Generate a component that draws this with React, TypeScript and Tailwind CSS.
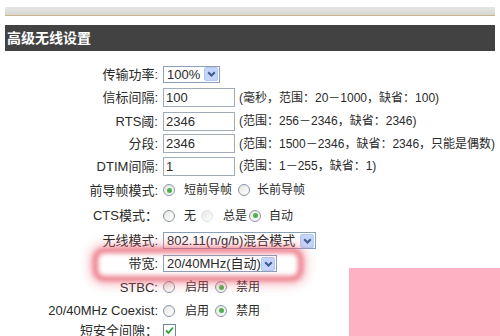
import React from "react";

const cjk = '"Liberation Sans", "Noto Sans CJK SC", sans-serif';

function Chevron() {
  return (
    <span className="flex h-[14px] w-[14px] items-center justify-center rounded-[2px] border border-[#b4c8f0] bg-[#c3d5fa]">
      <svg width="9" height="6" viewBox="0 0 9 6">
        <path d="M1.2 1.2 L4.5 4.5 L7.8 1.2" stroke="#3f5a8c" strokeWidth="2" fill="none" />
      </svg>
    </span>
  );
}

function Select({ text, w }: { text: string; w: number }) {
  return (
    <div
      className="flex h-[17px] items-center justify-between border border-[#8a9fba] bg-white pl-[3px] pr-[1px] text-[13px] leading-none text-[#2a2a2a]"
      style={{ width: w }}
    >
      <span className="whitespace-nowrap">{text}</span>
      <Chevron />
    </div>
  );
}

function Input({ v }: { v: string }) {
  return (
    <div className="flex h-[19px] w-[72px] items-center border border-[#a2acb8] bg-white pl-[2px] text-[13px] leading-none text-[#2a2a2a]">
      {v}
    </div>
  );
}

function Radio({ on, faded }: { on?: boolean; faded?: boolean }) {
  return (
    <span
      className={
        "flex h-[12px] w-[12px] shrink-0 items-center justify-center rounded-full border bg-gradient-to-br from-[#e6e6e0] to-white " +
        (faded ? "border-[#dde2e8]" : "border-[#8896a8]")
      }
    >
      {on && <span className="h-[5px] w-[5px] rounded-full bg-[#4cb34c]" />}
    </span>
  );
}

function Row({ label, h, children }: { label: string; h: number; children?: React.ReactNode }) {
  return (
    <div className="flex items-center" style={{ height: h }}>
      <div className="w-[158px] whitespace-nowrap text-right text-[13px] leading-none text-[#2a2a2a]">{label}</div>
      <div className="ml-[5px] flex items-center">{children}</div>
    </div>
  );
}

function Hint({ t }: { t: string }) {
  return <span className="ml-[4px] whitespace-nowrap text-[12px] leading-none text-[#2a2a2a]">{t}</span>;
}

function Opt({ t, ml = 9 }: { t: string; ml?: number }) {
  return (
    <span className="whitespace-nowrap text-[12px] leading-none text-[#2a2a2a]" style={{ marginLeft: ml }}>
      {t}
    </span>
  );
}

export default function App() {
  return (
    <div className="relative h-[336px] w-[500px] overflow-hidden bg-white" style={{ fontFamily: cjk }}>
      <div className="h-[7px]" />
      <div className="mx-[5px] h-[9px] border-b border-[#c9b58f] bg-gradient-to-b from-[#e6e6e4] to-[#d6d6d2]" />
      <div className="h-[9px]" />
      <div className="mx-[5px] flex h-[26px] items-center bg-[#424242] pl-[2px] text-[14px] font-bold text-white">
        高级无线设置
      </div>
      <div className="h-[11px]" />
      <div className="flex flex-col">
        <Row label="传输功率:" h={24}>
          <Select text="100%" w={57} />
        </Row>
        <Row label="信标间隔:" h={23}>
          <Input v="100" />
          <Hint t="(毫秒，范围：20－1000，缺省：100)" />
        </Row>
        <Row label="RTS阈:" h={24}>
          <Input v="2346" />
          <Hint t="(范围：256－2346，缺省：2346)" />
        </Row>
        <Row label="分段:" h={21}>
          <Input v="2346" />
          <Hint t="(范围：1500－2346，缺省：2346，只能是偶数)" />
        </Row>
        <Row label="DTIM间隔:" h={24}>
          <Input v="1" />
          <Hint t="(范围：1－255，缺省：1)" />
        </Row>
        <Row label="前导帧模式:" h={24}>
          <Radio on />
          <Opt t="短前导帧" />
          <span className="ml-[6px]">
            <Radio />
          </span>
          <Opt t="长前导帧" ml={7} />
        </Row>
        <Row label="CTS模式：" h={27}>
          <Radio />
          <Opt t="无" />
          <span className="ml-[5px]">
            <Radio faded />
          </span>
          <Opt t="总是" ml={10} />
          <span className="ml-[2px]">
            <Radio on />
          </span>
          <Opt t="自动" ml={8} />
        </Row>
        <Row label="无线模式:" h={23}>
          <Select text="802.11(n/g/b)混合模式" w={153} />
        </Row>
        <Row label="带宽:" h={23}>
          <Select text="20/40MHz(自动)" w={114} />
        </Row>
        <Row label="STBC:" h={24}>
          <Radio />
          <Opt t="启用" ml={10} />
          <span className="ml-[6px]">
            <Radio on />
          </span>
          <Opt t="禁用" ml={9} />
        </Row>
        <Row label="20/40MHz Coexist:" h={23}>
          <Radio />
          <Opt t="启用" ml={10} />
          <span className="ml-[6px]">
            <Radio on />
          </span>
          <Opt t="禁用" ml={9} />
        </Row>
        <Row label="短安全间隙：" h={16}>
          <span className="flex h-[13px] w-[13px] items-center justify-center border border-[#6f86a3] bg-white">
            <svg width="9" height="9" viewBox="0 0 9 9">
              <path d="M1 4.5 L3.5 7 L8 1.5" stroke="#2ea52e" strokeWidth="1.8" fill="none" />
            </svg>
          </span>
        </Row>
      </div>

      {/* red highlight ring */}
      <div className="absolute left-[93px] top-[248px] h-[33px] w-[210px] rounded-[11px] border-[5px] border-[#e3495c] opacity-75 shadow-[0_0_8px_4px_rgba(240,100,120,0.5)] blur-[2.5px]" />

      {/* pink block */}
      <div className="absolute left-[349px] top-[268px] h-[68px] w-[151px] bg-[#ffb1c4]" />
    </div>
  );
}
